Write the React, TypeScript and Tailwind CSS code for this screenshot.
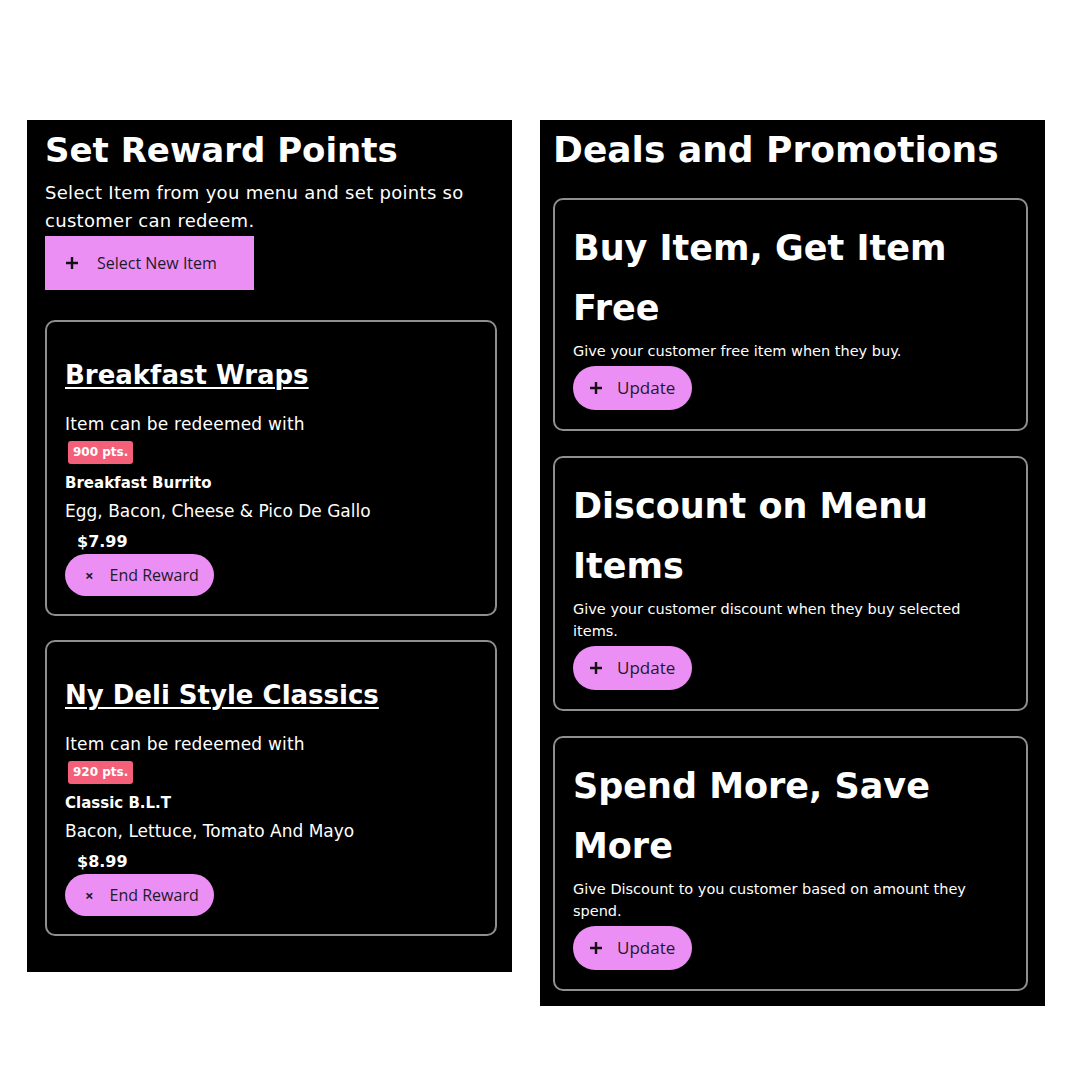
import React from 'react';

const REWARDS = [
  { title: 'Breakfast Wraps', pts: '900 pts.', name: 'Breakfast Burrito', desc: 'Egg, Bacon, Cheese & Pico De Gallo', price: '$7.99' },
  { title: 'Ny Deli Style Classics', pts: '920 pts.', name: 'Classic B.L.T', desc: 'Bacon, Lettuce, Tomato And Mayo', price: '$8.99' },
];

const DEALS = [
  { title: 'Buy Item, Get Item Free', desc: 'Give your customer free item when they buy.' },
  { title: 'Discount on Menu Items', desc: 'Give your customer discount when they buy selected items.' },
  { title: 'Spend More, Save More', desc: 'Give Discount to you customer based on amount they spend.' },
];

const Plus = () => (
  <svg width="14" height="14" viewBox="0 0 14 14" className="shrink-0">
    <path d="M7 1v12M1 7h12" stroke="#111" strokeWidth="2.4" />
  </svg>
);

const RewardCard: React.FC<{ r: (typeof REWARDS)[number] }> = ({ r }) => (
  <div className="border-2 border-[#8f8f8f] rounded-[10px] pl-[18px] pt-[33px] pb-[18px]">
    <h2 className="text-[26px] leading-[40px] font-bold underline underline-offset-[3px] decoration-2 text-white">
      {r.title}
    </h2>
    <p className="mt-[17px] text-[17px] leading-[24px] tracking-[0.2px] text-white">Item can be redeemed with</p>
    <span className="ml-[3px] mt-[5px] inline-block bg-[#f4607a] text-white text-[12px] font-bold leading-[23px] px-[5px] rounded-[3px]">
      {r.pts}
    </span>
    <p className="mt-[7px] text-[15px] leading-[24px] font-bold text-white">{r.name}</p>
    <p className="mt-[4px] text-[17px] leading-[24px] text-white">{r.desc}</p>
    <p className="ml-[12px] mt-[7px] text-[16px] leading-[24px] font-bold text-white">{r.price}</p>
    <button className="h-[42px] w-[149px] rounded-full bg-[#ec8ff5] flex items-center pl-[20px] gap-[16px] text-[#1d1a2a] text-[16px] font-['Open_Sans',sans-serif]">
      <span className="text-[15px] font-bold">×</span>
      <span>End Reward</span>
    </button>
  </div>
);

const DealCard: React.FC<{ d: (typeof DEALS)[number] }> = ({ d }) => (
  <div className="border-2 border-[#8f8f8f] rounded-[10px] pl-[18px] pr-[20px] pt-[18px] pb-[19px]">
    <h2 className="text-[35px] leading-[60px] font-bold text-white max-w-[400px]">{d.title}</h2>
    <p className="mt-[2px] text-[14.5px] leading-[22px] text-white">{d.desc}</p>
    <button className="mt-[4px] h-[44px] w-[119px] rounded-full bg-[#ec8ff5] flex items-center pl-[16px] gap-[14px] text-[#1d1a2a] text-[17px] font-['Open_Sans',sans-serif]">
      <Plus />
      <span>Update</span>
    </button>
  </div>
);

export default function App() {
  return (
    <div className="min-h-[1080px] bg-white flex items-start pt-[120px] pl-[27px] gap-[28px] font-['DejaVu_Sans','Noto_Sans',sans-serif]">
      <section className="w-[485px] bg-black pl-[18px] pr-[15px] pt-[8px] pb-[36px]">
        <h1 className="text-[34px] leading-[44px] font-bold text-white">Set Reward Points</h1>
        <p className="mt-[7px] text-[18px] leading-[28px] tracking-[0.3px] text-white">
          Select Item from you menu and set points so customer can redeem.
        </p>
        <button className="mt-[1px] h-[54px] w-[209px] bg-[#ec8ff5] flex items-center pl-[20px] gap-[18px] text-[#1d1a2a] text-[16px] font-['Open_Sans',sans-serif]">
          <Plus />
          <span>Select New Item</span>
        </button>
        <div className="mt-[30px] flex flex-col gap-[24px]">
          {REWARDS.map((r) => (
            <RewardCard key={r.title} r={r} />
          ))}
        </div>
      </section>
      <section className="w-[505px] bg-black pl-[13px] pr-[17px] pt-[4px] pb-[15px]">
        <h1 className="text-[36px] leading-[52px] font-bold text-white">Deals and Promotions</h1>
        <div className="mt-[22px] flex flex-col gap-[25px]">
          {DEALS.map((d) => (
            <DealCard key={d.title} d={d} />
          ))}
        </div>
      </section>
    </div>
  );
}
